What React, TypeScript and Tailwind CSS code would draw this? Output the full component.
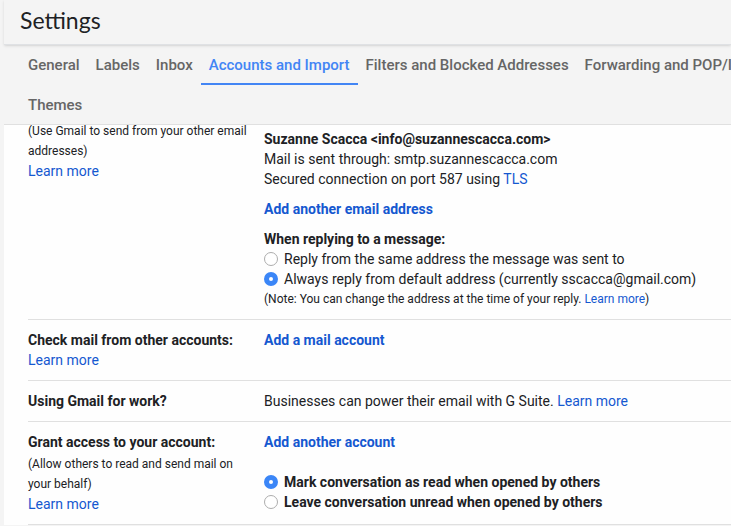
import React, { useState } from "react";

const tabRows = [
  [
    "General",
    "Labels",
    "Inbox",
    "Accounts and Import",
    "Filters and Blocked Addresses",
    "Forwarding and POP/IMAP",
  ],
  ["Themes"],
];

interface LinkProps {
  children: React.ReactNode;
  bold?: boolean;
}

function TextLink({ children, bold }: LinkProps) {
  return (
    <a
      href="#"
      className={
        bold
          ? "font-bold text-[#1558d0] hover:underline"
          : "text-[#1558d0] hover:underline"
      }
    >
      {children}
    </a>
  );
}

interface RadioProps {
  name: string;
  label: string;
  checked: boolean;
  onChange: () => void;
}

function Radio({ name, label, checked, onChange }: RadioProps) {
  return (
    <label className="flex items-center gap-1.5 whitespace-nowrap">
      <input
        type="radio"
        name={name}
        checked={checked}
        onChange={onChange}
        className="size-3.5 shrink-0 appearance-none rounded-full border border-[#adadad] bg-white checked:border-5 checked:border-[#3b86f7]"
      />
      {label}
    </label>
  );
}

interface RowProps {
  title: string;
  children: React.ReactNode;
  description?: string;
  learnMore?: boolean;
}

function SettingsRow({ title, children, description, learnMore }: RowProps) {
  return (
    <section className="flex border-b border-[#e0e0e0] py-2.5">
      <div className="w-59 shrink-0">
        <h2 className="font-bold">{title}</h2>
        {description && (
          <p className="pt-0.5 pr-3 text-xs leading-5">{description}</p>
        )}
        {learnMore && (
          <p>
            <TextLink>Learn more</TextLink>
          </p>
        )}
      </div>
      <div className="min-w-0 flex-1">{children}</div>
    </section>
  );
}

export default function App() {
  const [activeTab, setActiveTab] = useState("Accounts and Import");
  const [replyFrom, setReplyFrom] = useState("default");
  const [markAs, setMarkAs] = useState("read");

  return (
    <div className="min-h-screen overflow-hidden bg-[#f4f4f4] pl-1 font-['Roboto',sans-serif] text-sm leading-5 text-[#202124]">
      <header className="border-b border-[#dfe1e4] px-4 pt-1.5 pb-2.5 shadow-sm">
        <h1 className="font-['Lato',sans-serif] text-[23px] leading-7">
          Settings
        </h1>
      </header>

      <nav className="overflow-hidden border-b border-[#e0e0e0] pl-4">
        {tabRows.map((row) => (
          <div key={row[0]} className="flex last:-mb-px">
            {row.map((tab) => (
              <button
                key={tab}
                type="button"
                onClick={() => setActiveTab(tab)}
                className={
                  tab === activeTab
                    ? "h-10 shrink-0 border-b-2 border-[#4285f4] px-2 pt-0.5 text-[15px] font-medium whitespace-nowrap text-[#4285f4]"
                    : "h-10 shrink-0 border-b-2 border-transparent px-2 pt-0.5 text-[15px] font-medium whitespace-nowrap text-[#666666]"
                }
              >
                {tab}
              </button>
            ))}
          </div>
        ))}
      </nav>

      <main className="overflow-hidden bg-[#fefefe] pl-6">
        {/* first row is partly scrolled under the tabs */}
        <section className="-mt-1 flex border-b border-[#e0e0e0] pb-2.5">
          <div className="w-59 shrink-0">
            <p className="pr-3 text-xs leading-5">
              (Use Gmail to send from your other email addresses)
            </p>
            <p>
              <TextLink>Learn more</TextLink>
            </p>
          </div>
          <div className="min-w-0 flex-1 space-y-2.5 pt-2">
            <div>
              <p className="font-bold">
                Suzanne Scacca &lt;info@suzannescacca.com&gt;
              </p>
              <p>Mail is sent through: smtp.suzannescacca.com</p>
              <p>
                Secured connection on port 587 using <TextLink>TLS</TextLink>
              </p>
            </div>
            <p>
              <TextLink bold>Add another email address</TextLink>
            </p>
            <div>
              <h3 className="font-bold">When replying to a message:</h3>
              <Radio
                name="reply"
                label="Reply from the same address the message was sent to"
                checked={replyFrom === "same"}
                onChange={() => setReplyFrom("same")}
              />
              <Radio
                name="reply"
                label="Always reply from default address (currently sscacca@gmail.com)"
                checked={replyFrom === "default"}
                onChange={() => setReplyFrom("default")}
              />
              <p className="text-xs leading-5">
                (Note: You can change the address at the time of your reply.{" "}
                <TextLink>Learn more</TextLink>)
              </p>
            </div>
          </div>
        </section>

        <SettingsRow title="Check mail from other accounts:" learnMore>
          <TextLink bold>Add a mail account</TextLink>
        </SettingsRow>

        <SettingsRow title="Using Gmail for work?">
          Businesses can power their email with G Suite.{" "}
          <TextLink>Learn more</TextLink>
        </SettingsRow>

        <SettingsRow
          title="Grant access to your account:"
          description="(Allow others to read and send mail on your behalf)"
          learnMore
        >
          <TextLink bold>Add another account</TextLink>
          <div className="pt-5 font-bold">
            <Radio
              name="mark"
              label="Mark conversation as read when opened by others"
              checked={markAs === "read"}
              onChange={() => setMarkAs("read")}
            />
            <Radio
              name="mark"
              label="Leave conversation unread when opened by others"
              checked={markAs === "unread"}
              onChange={() => setMarkAs("unread")}
            />
          </div>
        </SettingsRow>
      </main>
    </div>
  );
}
